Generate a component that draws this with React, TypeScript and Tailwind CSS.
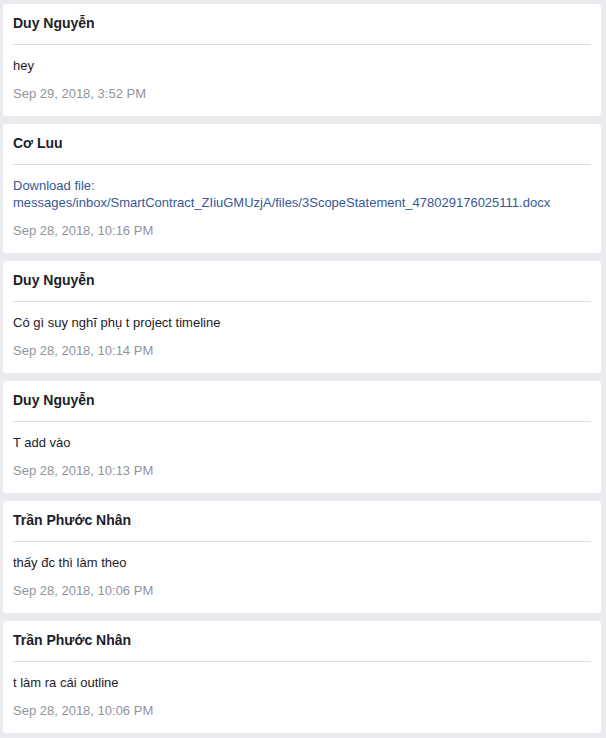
import React from "react";

type Msg = { name: string; text: React.ReactNode; date: string };

const messages: Msg[] = [
  { name: "Duy Nguyễn", text: "hey", date: "Sep 29, 2018, 3:52 PM" },
  {
    name: "Cơ Luu",
    text: (
      <a className="text-[#385898]" href="#">
        Download file:
        <br />
        messages/inbox/SmartContract_ZIiuGMUzjA/files/3ScopeStatement_478029176025111.docx
      </a>
    ),
    date: "Sep 28, 2018, 10:16 PM",
  },
  { name: "Duy Nguyễn", text: "Có gì suy nghĩ phụ t project timeline", date: "Sep 28, 2018, 10:14 PM" },
  { name: "Duy Nguyễn", text: "T add vào", date: "Sep 28, 2018, 10:13 PM" },
  { name: "Trần Phước Nhân", text: "thấy đc thì làm theo", date: "Sep 28, 2018, 10:06 PM" },
  { name: "Trần Phước Nhân", text: "t làm ra cái outline", date: "Sep 28, 2018, 10:06 PM" },
];

export default function App() {
  return (
    <div
      className="min-h-[738px] bg-[#e9ebee] pt-[4px] pb-[6px] pl-[3px] pr-[5px]"
      style={{ fontFamily: '"Liberation Sans", Arial, sans-serif' }}
    >
      <div className="flex flex-col gap-[8px]">
        {messages.map((m, i) => (
          <div key={i} className="bg-white rounded-[3px] px-[10px]">
            <div className="pt-[10px] pb-[12px] border-b border-[#dadde1] text-[14px] leading-[18px] font-bold text-[#1d2129]">
              {m.name}
            </div>
            <div className="pt-[12px] pb-[14px]">
              <div className="text-[13px] leading-[17px] text-[#1d2129]">{m.text}</div>
              <div className="mt-[11px] text-[13px] leading-[17px] text-[#90949c]">{m.date}</div>
            </div>
          </div>
        ))}
      </div>
    </div>
  );
}
